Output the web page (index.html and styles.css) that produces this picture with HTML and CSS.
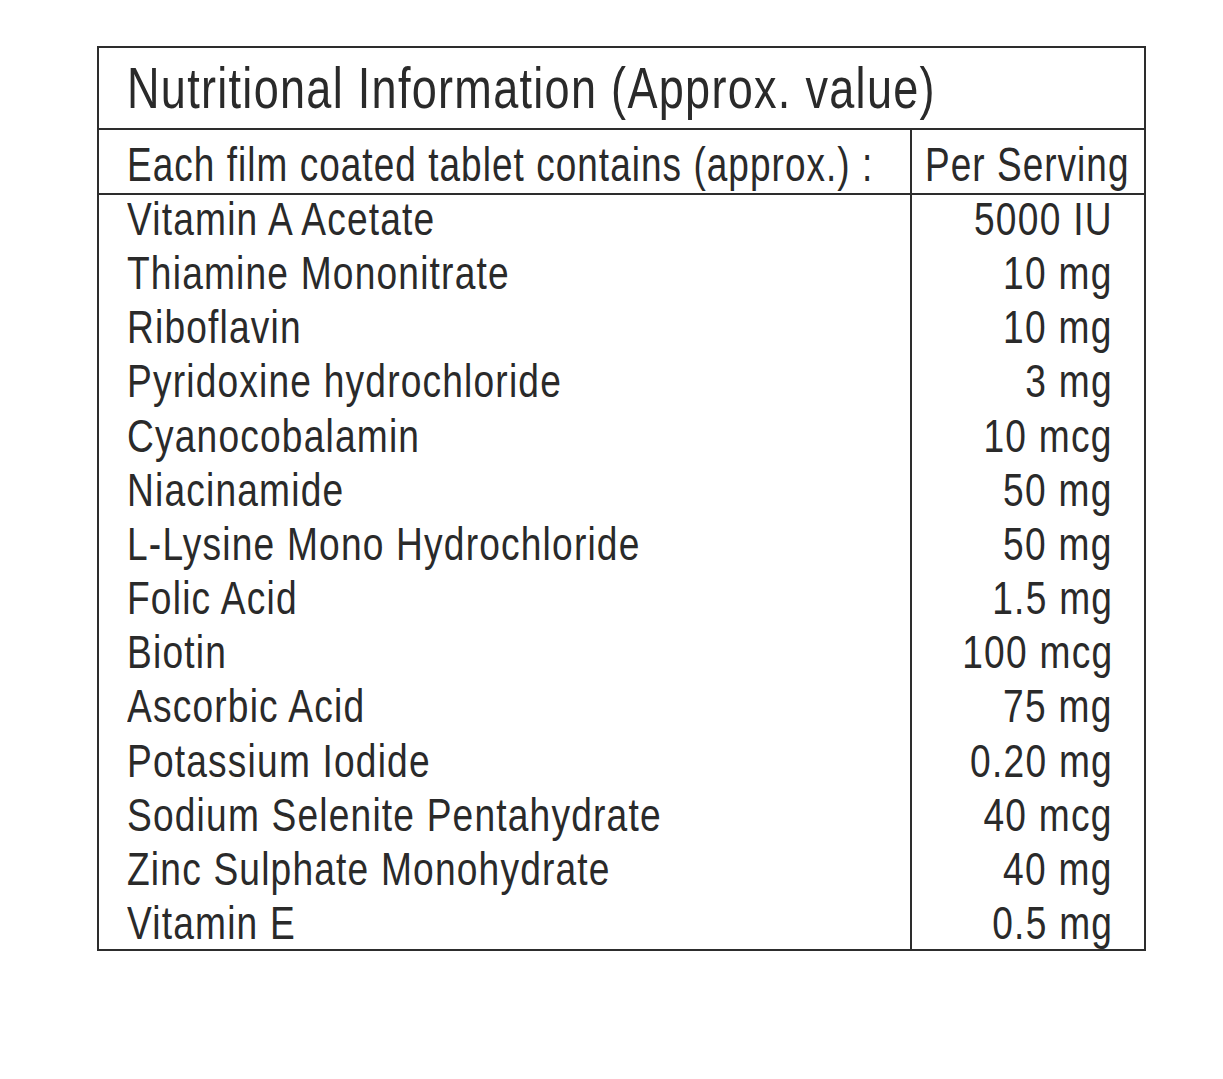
FILE: index.html
```html
<!DOCTYPE html>
<html lang="en">
<head>
<meta charset="utf-8">
<title>Nutritional Information</title>
<link rel="stylesheet" href="styles.css">
</head>
<body>
<div class="panel">
  <div class="title"><span class="t">Nutritional Information (Approx. value)</span></div>
  <div class="head">
    <div class="head-left"><span class="t">Each film coated tablet contains (approx.) :</span></div>
    <div class="head-right"><span class="t">Per Serving</span></div>
  </div>
  <div class="body">
    <ul class="names">
      <li><span class="t">Vitamin A Acetate</span></li>
      <li><span class="t">Thiamine Mononitrate</span></li>
      <li><span class="t">Riboflavin</span></li>
      <li><span class="t">Pyridoxine hydrochloride</span></li>
      <li><span class="t">Cyanocobalamin</span></li>
      <li><span class="t">Niacinamide</span></li>
      <li><span class="t">L-Lysine Mono Hydrochloride</span></li>
      <li><span class="t">Folic Acid</span></li>
      <li><span class="t">Biotin</span></li>
      <li><span class="t">Ascorbic Acid</span></li>
      <li><span class="t">Potassium Iodide</span></li>
      <li><span class="t">Sodium Selenite Pentahydrate</span></li>
      <li><span class="t">Zinc Sulphate Monohydrate</span></li>
      <li><span class="t">Vitamin E</span></li>
    </ul>
    <ul class="values">
      <li><span class="t">5000 IU</span></li>
      <li><span class="t">10 mg</span></li>
      <li><span class="t">10 mg</span></li>
      <li><span class="t">3 mg</span></li>
      <li><span class="t">10 mcg</span></li>
      <li><span class="t">50 mg</span></li>
      <li><span class="t">50 mg</span></li>
      <li><span class="t">1.5 mg</span></li>
      <li><span class="t">100 mcg</span></li>
      <li><span class="t">75 mg</span></li>
      <li><span class="t">0.20 mg</span></li>
      <li><span class="t">40 mcg</span></li>
      <li><span class="t">40 mg</span></li>
      <li><span class="t">0.5 mg</span></li>
    </ul>
  </div>
</div>
</body>
</html>
```

FILE: styles.css
```css
html, body {
  margin: 0;
  padding: 0;
  background: #ffffff;
}

body {
  padding-top: 46px;
  padding-left: 97px;
  font-family: "Liberation Sans", Arial, sans-serif;
  color: #2a2a2a;
}

.panel {
  width: 1049px;
  box-sizing: border-box;
  border: 2px solid #2d2d2d;
  overflow: hidden;
}

.t {
  display: inline-block;
  white-space: nowrap;
  transform: scaleX(0.79);
  transform-origin: 0 50%;
  letter-spacing: 1.5px;
}

.title {
  height: 80px;
  line-height: 80px;
  font-size: 57px;
  padding-left: 28px;
  border-bottom: 2px solid #2d2d2d;
  white-space: nowrap;
}

.title .t {
  transform: scaleX(0.79);
  letter-spacing: 1.64px;
}

.head {
  display: grid;
  grid-template-columns: 811px 1fr;
  border-bottom: 2px solid #2d2d2d;
  font-size: 48px;
  line-height: 56px;
}

.head .t {
  transform: scaleX(0.77);
  letter-spacing: 1.35px;
}

.head-left {
  padding: 7px 0 0 28px;
  white-space: nowrap;
  overflow: hidden;
}

.head-right {
  padding: 7px 0 0 13px;
  border-left: 2px solid #2d2d2d;
  white-space: nowrap;
  overflow: hidden;
}

.body {
  display: grid;
  grid-template-columns: 811px 1fr;
  font-size: 47px;
  line-height: 54.15px;
}

.names,
.values {
  list-style: none;
  margin: 0;
  padding: 0;
}

.names li,
.values li {
  white-space: nowrap;
  position: relative;
  top: -3px;
}

.names {
  padding-left: 28px;
  margin-bottom: -4px;
}

.values {
  border-left: 2px solid #2d2d2d;
  text-align: right;
  padding-right: 31px;
  margin-bottom: -4px;
}

.values .t {
  transform-origin: 100% 50%;
  letter-spacing: 1.6px;
}
```
